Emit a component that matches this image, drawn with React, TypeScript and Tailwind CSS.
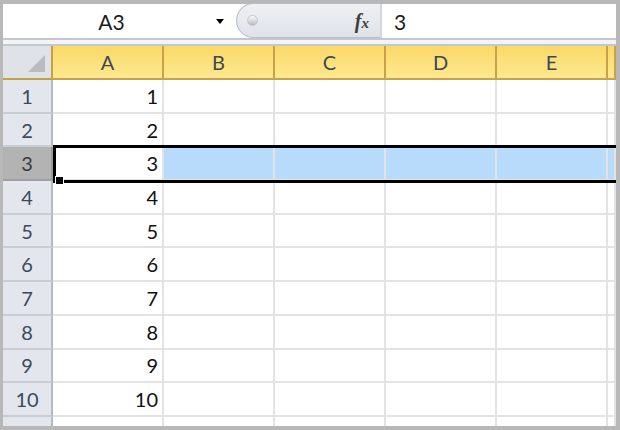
import React from 'react';

const COLS = ['A', 'B', 'C', 'D', 'E', ''];
const ROWS = [1, 2, 3, 4, 5, 6, 7, 8, 9, 10, 11];
const ACTIVE_ROW = 3;

const FormulaBar: React.FC = () => (
  <div className="flex h-[34px] bg-white">
    <div className="flex w-[233px] items-center">
      <span className="flex-1 text-center text-[21px] leading-none text-[#1b1b1b] pl-[4px]">A3</span>
      <span className="mr-[12px] h-0 w-0 border-x-[4px] border-t-[5px] border-x-transparent border-t-black" />
    </div>
    <div className="flex w-[144px] items-center rounded-l-full border border-r-0 border-[#b7bdc5] bg-gradient-to-b from-[#eef0f3] to-[#dfe3e8] -mt-px">
      <span className="ml-[10px] h-[11px] w-[11px] rounded-full bg-gradient-to-b from-[#fafafa] to-[#b9bdc2] border border-[#c4c8cc]" />
      <span className="ml-auto mr-[11px] font-['Liberation_Serif',serif] text-[20px] italic font-bold leading-none text-[#3d3d3d]">
        f<span className="text-[15px]">x</span>
      </span>
    </div>
    <div className="flex flex-1 items-center border-l-2 border-[#d3d7dc] pl-[12px] text-[21px] leading-none text-[#1b1b1b]">
      3
    </div>
  </div>
);

const App: React.FC = () => {
  return (
    <div className="h-[430px] w-[620px] overflow-hidden bg-[#b8b8b8] pt-[4px] pl-[3px] pr-[4px] pb-[4px] font-['Lato','Liberation_Sans',sans-serif]">
      <div className="flex h-full flex-col bg-white">
        <FormulaBar />
        <div className="h-[8px] border-y-2 border-[#c3c8d0] bg-[#f2f4f7]" />

        <div className="relative flex-1 overflow-hidden">
          <div className="grid grid-cols-[50px_repeat(5,111px)_1fr] grid-rows-[34px_repeat(11,33.7px)]">
            {/* corner */}
            <div className="relative border-r-2 border-b-2 border-[#c5a04c] bg-[#dfe3e8]">
              <div className="absolute bottom-[6px] right-[6px] h-0 w-0 [border-bottom:17px_solid_#b9bdc2] [border-left:17px_solid_transparent]" />
            </div>
            {COLS.map((c, i) => (
              <div
                key={`h${i}`}
                className="flex items-center justify-center border-r-2 border-b-2 border-[#c9a04b] bg-gradient-to-b from-[#fad867] to-[#fee98f] text-[20px] text-[#3c4852]"
              >
                {c}
              </div>
            ))}

            {ROWS.map((r) => {
              const active = r === ACTIVE_ROW;
              return (
                <React.Fragment key={r}>
                  <div
                    className={`flex items-center justify-center border-r-2 border-b-2 text-[20px] ${
                      active
                        ? 'bg-[#b3b3b3] border-r-[#9a9a9a] border-b-[#9f9f9f] text-[#3c3c3c]'
                        : 'bg-[#e3e7ed] border-r-[#b3bac3] border-b-[#c8cdd4] text-[#3a4a5c]'
                    }`}
                  >
                    {r <= 10 ? r : ''}
                  </div>
                  {COLS.map((_, ci) => (
                    <div
                      key={`${r}-${ci}`}
                      className={`flex items-center justify-end border-r-2 border-b-2 border-[#e2e3e4] pr-[4px] text-[20px] text-[#111111] ${
                        active && ci > 0 ? 'bg-[#b8dbfb]' : 'bg-white'
                      }`}
                    >
                      {ci === 0 && r <= 10 ? r : ''}
                    </div>
                  ))}
                </React.Fragment>
              );
            })}
          </div>

          {/* selection outline for row 3 */}
          <div className="pointer-events-none absolute left-[50px] right-0 top-[99px] h-[38px] border-y-[3px] border-l-[3px] border-black" />
          <div className="pointer-events-none absolute left-[52px] top-[130px] h-[9px] w-[9px] border border-white bg-black" />
        </div>
      </div>
    </div>
  );
};

export default App;
